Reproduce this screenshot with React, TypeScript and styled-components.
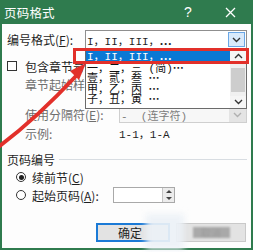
import React from "react";
import styled, { createGlobalStyle } from "styled-components";

const GREEN = "#2f7b4e";
const RED = "#e2302a";

const GlobalStyle = createGlobalStyle`
  html, body { margin: 0; padding: 0; background: #ffffff; }
  body {
    font-family: "Noto Sans CJK SC", "Noto Sans", sans-serif;
    font-size: 12px;
    color: #1f1f1f;
  }
`;

const Stage = styled.div`
  position: relative;
  width: 257px;
  height: 252px;
  overflow: hidden;
`;

const Dialog = styled.div`
  width: 253px;
  height: 250px;
  box-sizing: border-box;
  border: 2px solid ${GREEN};
  border-top: none;
  background: #fdfdfd;
  display: flex;
  flex-direction: column;
`;

const TitleBar = styled.div`
  height: 24px;
  flex: none;
  background: ${GREEN};
  color: #ffffff;
  display: flex;
  align-items: center;
  padding-left: 2px;
`;

const Title = styled.span`
  flex: 1;
  font-size: 12.5px;
  letter-spacing: 0.2px;
`;

const TitleButton = styled.span`
  width: 42px;
  height: 24px;
  display: flex;
  align-items: center;
  justify-content: center;
  font-family: "Liberation Sans", sans-serif;
  font-size: 14px;
`;

const Body = styled.div`
  flex: 1;
  display: flex;
  flex-direction: column;
  padding: 0 4px 0 5px;
`;

const Row = styled.div<{ $top: number; $h: number; $indent?: number }>`
  display: flex;
  align-items: center;
  margin-top: ${({ $top }) => $top}px;
  height: ${({ $h }) => $h}px;
  padding-left: ${({ $indent }) => $indent ?? 0}px;
  flex: none;
`;

const Label = styled.span<{ $w?: number; $muted?: boolean }>`
  width: ${({ $w }) => ($w ? `${$w}px` : "auto")};
  flex: none;
  white-space: nowrap;
  color: ${({ $muted }) => ($muted ? "#6f6f6f" : "#1f1f1f")};
`;

const Key = styled.span`
  text-decoration: underline;
`;

const Combo = styled.div<{ $disabled?: boolean }>`
  flex: 1;
  align-self: stretch;
  box-sizing: border-box;
  display: flex;
  align-items: center;
  border: 1px solid ${({ $disabled }) => ($disabled ? "#cfcfcf" : "#8f8f8f")};
  background: ${({ $disabled }) => ($disabled ? "#f7f7f7" : "#ffffff")};
  color: ${({ $disabled }) => ($disabled ? "#7c7c7c" : "#1f1f1f")};
`;

const ComboText = styled.span`
  flex: 1;
  padding-left: 1px;
  font-family: "Liberation Mono", "Noto Sans CJK SC", monospace;
  font-size: 11px;
  white-space: pre;
  overflow: hidden;
`;

const Ell = styled.span`
  font-family: "Noto Sans CJK SC", sans-serif;
  font-weight: 700;
  line-height: 1;
`;

const ComboButton = styled.span<{ $disabled?: boolean }>`
  width: 17px;
  align-self: stretch;
  box-sizing: border-box;
  display: flex;
  align-items: center;
  justify-content: center;
  margin: ${({ $disabled }) => ($disabled ? "0" : "1px")};
  background: ${({ $disabled }) => ($disabled ? "#e4e4e4" : "#d9eafb")};
  border: 1px solid ${({ $disabled }) => ($disabled ? "#e4e4e4" : "#6aa7e6")};
`;

const CheckBox = styled.span`
  width: 10px;
  height: 10px;
  box-sizing: border-box;
  border: 1px solid #333333;
  background: #ffffff;
  margin-right: 8px;
  flex: none;
`;

const Radio = styled.span<{ $checked?: boolean }>`
  width: 10px;
  height: 10px;
  box-sizing: border-box;
  border-radius: 50%;
  border: 1px solid #333333;
  background: #ffffff;
  margin-right: 6px;
  flex: none;
  display: flex;
  align-items: center;
  justify-content: center;

  &::after {
    content: "";
    width: 5px;
    height: 5px;
    border-radius: 50%;
    background: ${({ $checked }) => ($checked ? "#1f1f1f" : "transparent")};
  }
`;

const Mono = styled.span`
  font-family: "Liberation Mono", "Noto Sans CJK SC", monospace;
  font-size: 11px;
`;

const GroupLine = styled.span`
  flex: 1;
  height: 1px;
  margin-left: 4px;
  background: #d8dde2;
`;

const Spin = styled.div`
  width: 62px;
  align-self: stretch;
  box-sizing: border-box;
  border: 1px solid #a9a9a9;
  background: #ffffff;
  display: flex;
  justify-content: flex-end;
`;

const SpinButtons = styled.div`
  width: 11px;
  display: flex;
  flex-direction: column;
  border-left: 1px solid #c4c4c4;
  background: #ececec;
`;

const SpinHalf = styled.span<{ $up?: boolean }>`
  flex: 1;
  display: flex;
  align-items: center;
  justify-content: center;

  &::after {
    content: "";
    border-left: 3px solid transparent;
    border-right: 3px solid transparent;
    ${({ $up }) =>
      $up ? "border-bottom: 3px solid #444;" : "border-top: 3px solid #444;"}
  }
`;

const ButtonRow = styled.div`
  display: flex;
  gap: 6px;
  margin-top: 20px;
  height: 19px;
  padding-left: 89px;
`;

const DialogButton = styled.div<{ $primary?: boolean; $w: number }>`
  width: ${({ $w }) => $w}px;
  box-sizing: border-box;
  display: flex;
  align-items: center;
  justify-content: center;
  background: #e3e3e3;
  border: ${({ $primary }) =>
    $primary ? "2px solid #1b7ad6" : "1px solid #c9c9c9"};
  padding-right: ${({ $primary }) => ($primary ? 6 : 0)}px;
`;

const Blurred = styled.span`
  width: 37px;
  height: 11px;
  font-size: 10px;
  line-height: 11px;
  color: #9c9c9c;
  background: #a9a9a9;
  filter: blur(1.2px);
  text-align: center;
`;

/* open dropdown list, lies over the form */
const DropList = styled.div`
  position: absolute;
  left: 85px;
  top: 49px;
  width: 162px;
  height: 60px;
  box-sizing: border-box;
  border: 1px solid #6b6b6b;
  background: #ffffff;
  display: flex;
`;

const Items = styled.div`
  flex: 1;
  display: flex;
  flex-direction: column;
  overflow: hidden;
`;

const Item = styled.div<{ $active?: boolean }>`
  flex: none;
  height: ${({ $active }) => ($active ? 12 : 10.3)}px;
  line-height: ${({ $active }) => ($active ? 12 : 10.3)}px;
  padding-left: 1px;
  font-family: "Liberation Mono", "Noto Sans CJK SC", monospace;
  font-size: 11px;
  white-space: pre;
  background: ${({ $active }) => ($active ? "#0a78d4" : "transparent")};
  color: ${({ $active }) => ($active ? "#ffffff" : "#111111")};
`;

const ScrollBar = styled.div`
  width: 16px;
  display: flex;
  flex-direction: column;
  background: #f0f0f0;
`;

const ScrollArrow = styled.div`
  height: 12px;
  display: flex;
  align-items: center;
  justify-content: center;
  background: #f5f5f5;
`;

const ScrollTrack = styled.div`
  flex: 1;
  padding: 6px 1px 0;
`;

const Thumb = styled.div`
  height: 24px;
  background: #cdcdcd;
`;

const RedBox = styled.div`
  position: absolute;
  left: 73px;
  top: 48px;
  width: 176px;
  height: 16px;
  box-sizing: border-box;
  border: 3px solid ${RED};
`;

const Overlay = styled.svg`
  position: absolute;
  left: 0;
  top: 0;
  pointer-events: none;
`;

const Smudge = styled.div`
  position: absolute;
  left: 146px;
  top: 214px;
  width: 38px;
  height: 36px;
  background: rgba(236, 241, 246, 0.92);
  filter: blur(3px);
`;

const Chevron = ({ up, color = "#333" }: { up?: boolean; color?: string }) => (
  <svg width="9" height="6" viewBox="0 0 9 6">
    <path
      d={up ? "M1 5 L4.5 1.5 L8 5" : "M1 1 L4.5 4.5 L8 1"}
      fill="none"
      stroke={color}
      strokeWidth="1.4"
    />
  </svg>
);

const listItems = ["一，二，三 (简)", "壹，贰，叁 ", "甲，乙，丙 ", "子，丑，寅 "];

export default function App() {
  return (
    <Stage>
      <GlobalStyle />
      <Dialog>
        <TitleBar>
          <Title>页码格式</Title>
          <TitleButton>?</TitleButton>
          <TitleButton>
            <svg width="11" height="11" viewBox="0 0 11 11">
              <path d="M1 1 L10 10 M10 1 L1 10" stroke="#fff" strokeWidth="1.3" />
            </svg>
          </TitleButton>
        </TitleBar>
        <Body>
          <Row $top={6} $h={19}>
            <Label $w={78}>
              编号格式(<Key>F</Key>):
            </Label>
            <Combo>
              <ComboText>
                I，II，III，<Ell>⋯</Ell>
              </ComboText>
              <ComboButton>
                <Chevron />
              </ComboButton>
            </Combo>
          </Row>

          <Row $top={10} $h={14}>
            <CheckBox />
            <Label>
              包含章节号(<Key>N</Key>)
            </Label>
          </Row>

          <Row $top={3} $h={17} $indent={18}>
            <Label $w={94} $muted>
              章节起始样式(<Key>P</Key>):
            </Label>
            <Combo $disabled>
              <ComboText />
              <ComboButton $disabled>
                <Chevron color="#b0b0b0" />
              </ComboButton>
            </Combo>
          </Row>

          <Row $top={13} $h={17} $indent={18}>
            <Label $w={94} $muted>
              使用分隔符(<Key>E</Key>):
            </Label>
            <Combo $disabled>
              <ComboText>-  (连字符)</ComboText>
              <ComboButton $disabled>
                <Chevron color="#b0b0b0" />
              </ComboButton>
            </Combo>
          </Row>

          <Row $top={3} $h={14} $indent={18}>
            <Label $w={94} $muted>
              示例:
            </Label>
            <Mono>1-1，1-A</Mono>
          </Row>

          <Row $top={12} $h={14}>
            <Label>页码编号</Label>
            <GroupLine />
          </Row>

          <Row $top={4} $h={14} $indent={9}>
            <Radio $checked />
            <Label>
              续前节(<Key>C</Key>)
            </Label>
          </Row>

          <Row $top={3} $h={16} $indent={9}>
            <Radio />
            <Label $w={81}>
              起始页码(<Key>A</Key>):
            </Label>
            <Spin>
              <SpinButtons>
                <SpinHalf $up />
                <SpinHalf />
              </SpinButtons>
            </Spin>
          </Row>

          <ButtonRow>
            <DialogButton $primary $w={74}>
              确定
            </DialogButton>
            <DialogButton $w={70}>
              <Blurred>取消</Blurred>
            </DialogButton>
          </ButtonRow>
        </Body>
      </Dialog>

      <DropList>
        <Items>
          <Item $active>
            I，II，III，<Ell>⋯</Ell>
          </Item>
          {listItems.map((t) => (
            <Item key={t}>
              {t}
              <Ell>⋯</Ell>
            </Item>
          ))}
        </Items>
        <ScrollBar>
          <ScrollArrow>
            <Chevron up />
          </ScrollArrow>
          <ScrollTrack>
            <Thumb />
          </ScrollTrack>
          <ScrollArrow>
            <Chevron />
          </ScrollArrow>
        </ScrollBar>
      </DropList>

      <RedBox />
      <Smudge />

      <Overlay width="257" height="252" viewBox="0 0 257 252">
        <path
          d="M -3 148 Q 36 119 76 76"
          fill="none"
          stroke={RED}
          strokeWidth="4"
          strokeLinecap="round"
        />
        <polygon points="86,63 70,71 79,80" fill={RED} />
      </Overlay>
    </Stage>
  );
}
